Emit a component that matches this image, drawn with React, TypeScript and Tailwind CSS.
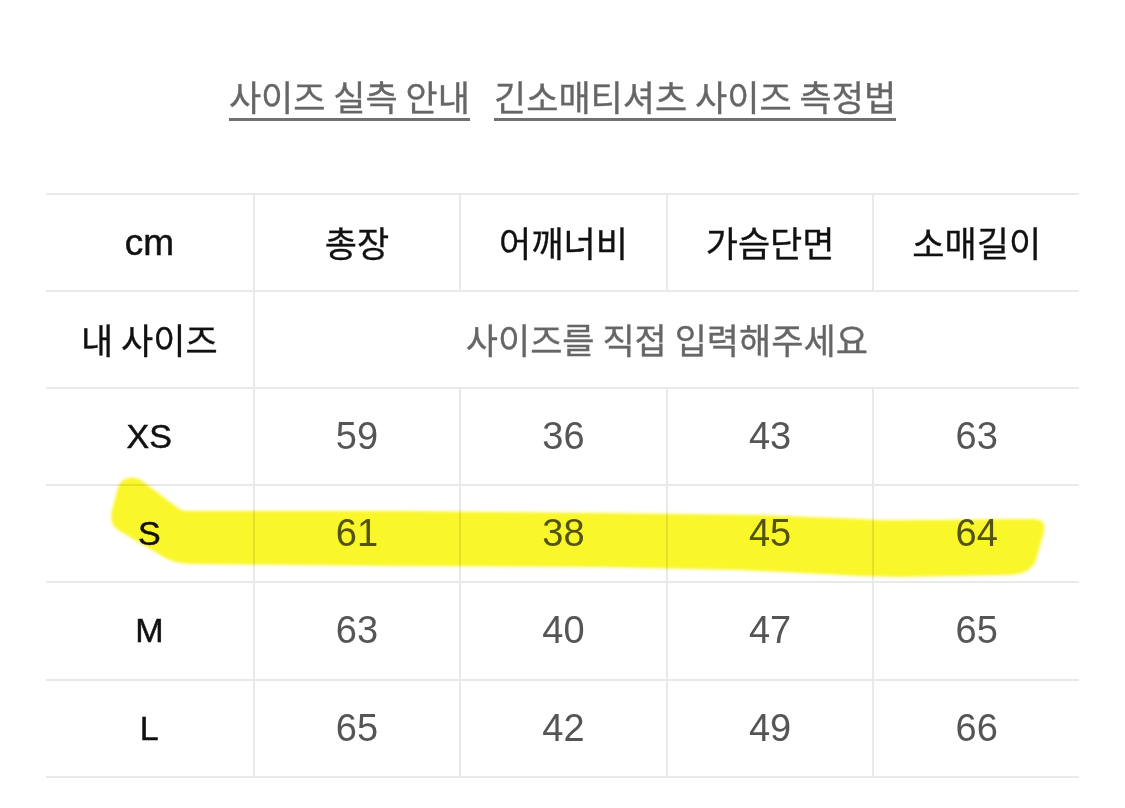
import React from "react";

const KR = '"Noto Sans CJK KR", "Noto Sans", sans-serif';
const LAT = '"Liberation Sans", "Noto Sans CJK KR", sans-serif';

const headers = ["총장", "어깨너비", "가슴단면", "소매길이"];
const rows: [string, string[]][] = [
  ["XS", ["59", "36", "43", "63"]],
  ["S", ["61", "38", "45", "64"]],
  ["M", ["63", "40", "47", "65"]],
  ["L", ["65", "42", "49", "66"]],
];

function Cell({ children, first, className = "" }: { children?: React.ReactNode; first?: boolean; className?: string }) {
  return (
    <div className={`flex items-center justify-center ${first ? "" : "border-l-2 border-[#e9e9e9]"} ${className}`}>
      {children}
    </div>
  );
}

export default function App() {
  return (
    <div className="relative w-[1125px] h-[808px] bg-white overflow-hidden">
      <div className="flex justify-center gap-[24px] pt-[76px]" style={{ fontFamily: KR }}>
        <span className="text-[35px] leading-[40px] text-[#666] [-webkit-text-stroke:0.35px_#666] border-b-[3px] border-[#707070] pb-[2px]">사이즈 실측 안내</span>
        <span className="text-[35px] leading-[40px] text-[#666] [-webkit-text-stroke:0.35px_#666] border-b-[3px] border-[#707070] pb-[2px]">긴소매티셔츠 사이즈 측정법</span>
      </div>

      <div className="mx-[46px] mt-[72px] border-t-2 border-[#e9e9e9]">
        <div className="grid grid-cols-5 h-[97px] border-b-2 border-[#e9e9e9]">
          <Cell first>
            <span className="text-[37px] text-[#111] [-webkit-text-stroke:0.5px_#111]" style={{ fontFamily: LAT }}>cm</span>
          </Cell>
          {headers.map((h) => (
            <Cell key={h}>
              <span className="text-[35px] text-[#111] [-webkit-text-stroke:0.35px_#111]" style={{ fontFamily: KR }}>{h}</span>
            </Cell>
          ))}
        </div>
        <div className="grid grid-cols-5 h-[97px] border-b-2 border-[#e9e9e9]">
          <Cell first>
            <span className="text-[35px] text-[#111] [-webkit-text-stroke:0.35px_#111]" style={{ fontFamily: KR }}>내 사이즈</span>
          </Cell>
          <Cell className="col-span-4">
            <span className="text-[35px] text-[#666] [-webkit-text-stroke:0.35px_#666]" style={{ fontFamily: KR }}>사이즈를 직접 입력해주세요</span>
          </Cell>
        </div>
        {rows.map(([label, vals]) => (
          <div key={label} className="grid grid-cols-5 h-[97.2px] border-b-2 border-[#e9e9e9]">
            <Cell first>
              <span className="text-[34px] text-[#111] [-webkit-text-stroke:0.5px_#111]" style={{ fontFamily: LAT }}>{label}</span>
            </Cell>
            {vals.map((v, i) => (
              <Cell key={i}>
                <span className="text-[38px] text-[#555]" style={{ fontFamily: LAT }}>{v}</span>
              </Cell>
            ))}
          </div>
        ))}
      </div>

      <svg
        className="absolute left-0 top-0 pointer-events-none mix-blend-multiply"
        width="1125"
        height="808"
        viewBox="0 0 1125 808"
      >
        <defs>
          <filter id="soft" x="-5%" y="-20%" width="110%" height="140%">
            <feGaussianBlur stdDeviation="1.6" />
          </filter>
        </defs>
        <path
          filter="url(#soft)"
          fill="#f9f629"
          d="M126 479 C132 476 140 478 146 484 L178 508 C182 511 186 511 192 511 L400 511 L600 513 L760 515 L860 519 C880 521 900 520 930 520 L1030 519 C1042 519 1046 522 1044 532 L1036 560 C1032 570 1024 574 1010 575 L900 577 L860 576 L740 570 L600 567 L400 566 L190 564 C176 563 170 561 160 555 L118 530 C112 526 110 520 112 510 L118 488 C120 482 122 480 126 479 Z"
        />
      </svg>
    </div>
  );
}
